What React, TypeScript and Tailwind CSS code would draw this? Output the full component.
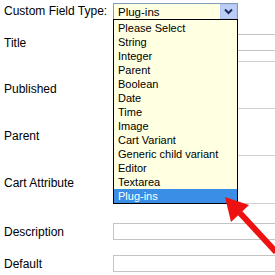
const OPTIONS = [
  "Please Select",
  "String",
  "Integer",
  "Parent",
  "Boolean",
  "Date",
  "Time",
  "Image",
  "Cart Variant",
  "Generic child variant",
  "Editor",
  "Textarea",
  "Plug-ins",
];

function Label({ children, top = false }: { children: React.ReactNode; top?: boolean }) {
  return (
    <div className={`w-[113px] shrink-0 pl-[4px] text-[12px] leading-[14px] text-black ${top ? "pt-[21px]" : ""}`}>
      {children}
    </div>
  );
}

export default function App() {
  return (
    <div className="relative w-[275px] h-[275px] overflow-hidden bg-white font-['Liberation_Sans',Arial,sans-serif]">
      {/* form rows */}
      <div className="flex flex-col">
        <div className="flex items-center h-[21px]">
          <Label>Custom Field Type:</Label>
          <div className="mt-[2px] w-[125px] h-[17px] border border-[#7f9db9] bg-[#ffffe1] flex items-center">
            <span className="flex-1 pl-[4px] text-[11.5px] leading-[14px] text-black">Plug-ins</span>
            <span className="w-[17px] h-[15px] bg-[#bccef5] border border-[#b0c4ef] flex items-center justify-center">
              <svg width="9" height="7" viewBox="0 0 9 7">
                <path d="M1 1.5 L4.5 5 L8 1.5" fill="none" stroke="#1c2a5c" strokeWidth="2" />
              </svg>
            </span>
          </div>
        </div>

        <div className="flex items-center h-[17px] mt-[13px]">
          <Label>Title</Label>
          <div className="flex-1 h-[17px] border border-r-0 border-[#c4c4c4]" />
        </div>

        <div className="flex h-[47px] mt-[10px]">
          <Label top>Published</Label>
          <div className="flex-1 border-t border-[#d0d0d0]" />
        </div>

        <div className="flex h-[47px]">
          <Label top>Parent</Label>
          <div className="flex-1 border-t border-[#d0d0d0]" />
        </div>

        <div className="flex h-[49px]">
          <Label top>Cart Attribute</Label>
          <div className="flex-1 border-t border-b border-[#d0d0d0]" />
        </div>

        <div className="flex items-center h-[17px] mt-[19px]">
          <Label>Description</Label>
          <div className="flex-1 h-[17px] border border-r-0 border-[#c4c4c4]" />
        </div>

        <div className="flex items-center h-[17px] mt-[15px]">
          <Label>Default</Label>
          <div className="flex-1 h-[17px] border border-r-0 border-[#c4c4c4]" />
        </div>
      </div>

      {/* open dropdown list */}
      <div className="absolute top-[19px] left-[113px] w-[125px] border border-black bg-[#ffffe1] pt-[1px]">
        {OPTIONS.map((o) => (
          <div
            key={o}
            className={`h-[14px] pl-[4px] text-[11px] leading-[14px] ${
              o === "Plug-ins" ? "bg-[#3a8ee6] text-white" : "text-black"
            }`}
          >
            {o}
          </div>
        ))}
      </div>

      {/* red arrow */}
      <svg className="absolute inset-0 pointer-events-none" width="275" height="275" viewBox="0 0 275 275">
        <line x1="240" y1="213" x2="276" y2="252" stroke="#ee1111" strokeWidth="6" />
        <polygon points="225,197 231,222 249,205" fill="#ee1111" />
      </svg>
    </div>
  );
}
